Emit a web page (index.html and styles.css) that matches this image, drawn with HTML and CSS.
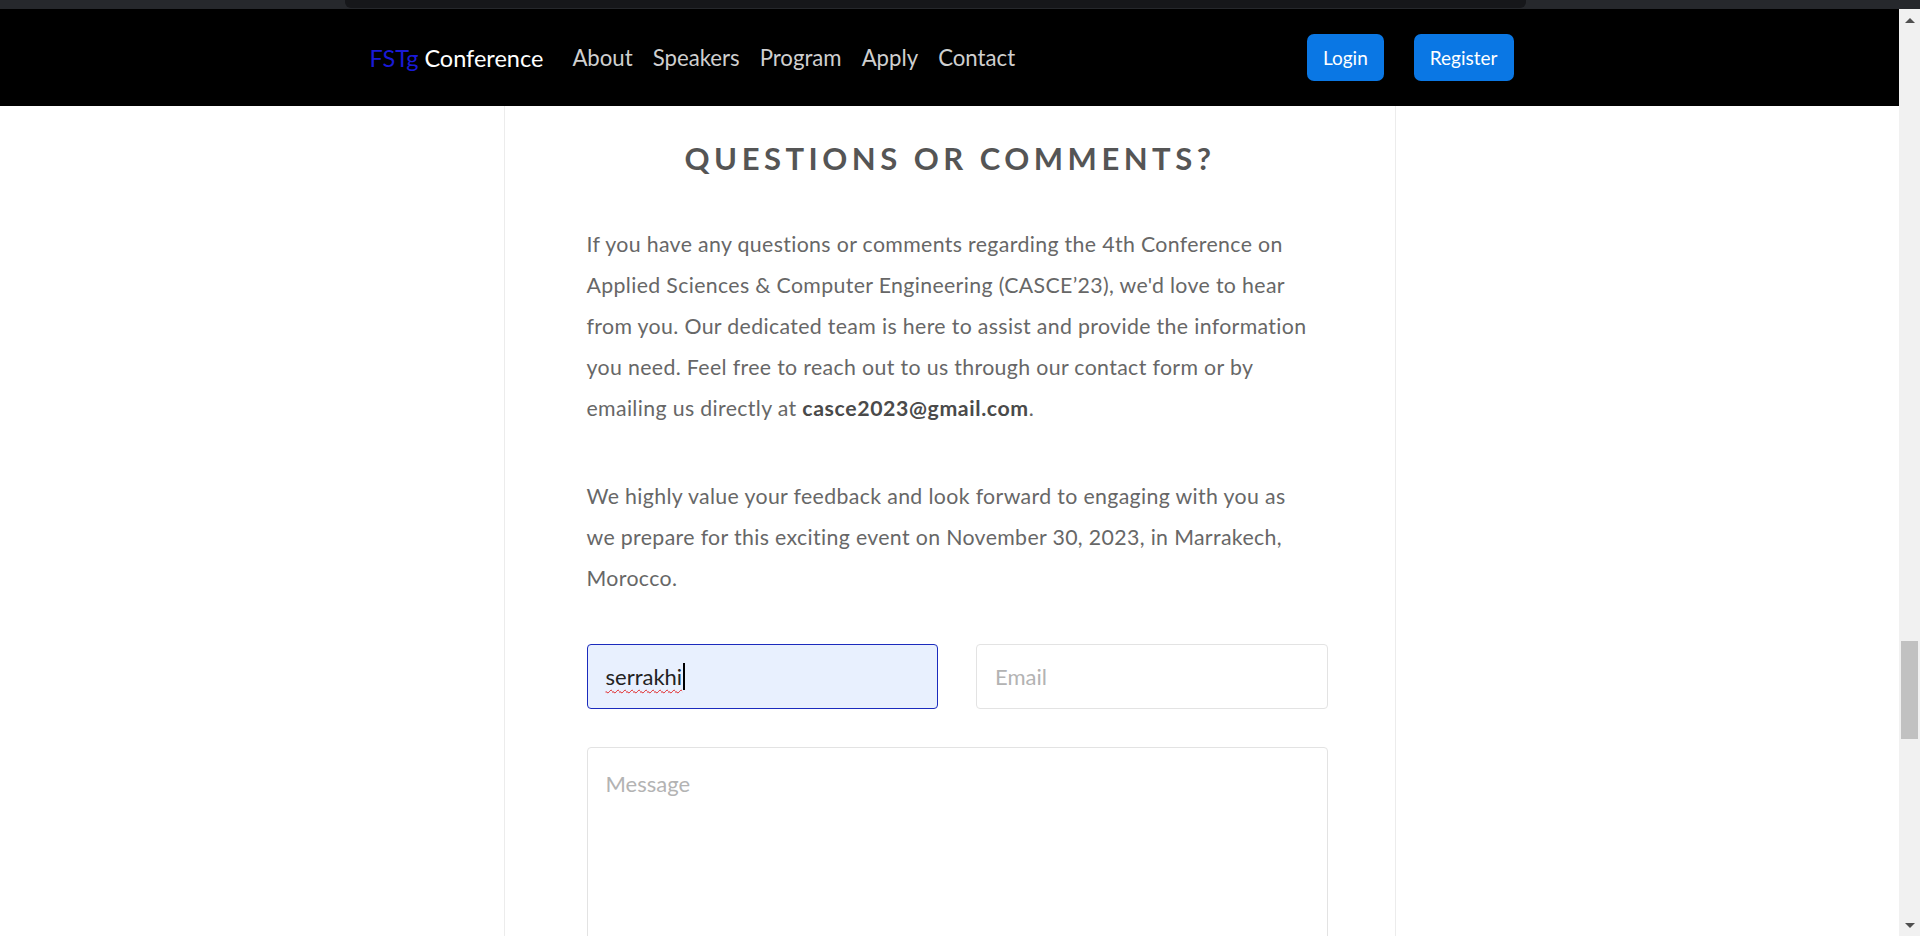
FILE: index.html
```html
<!DOCTYPE html>
<html lang="en">
<head>
<meta charset="utf-8">
<title>FSTg Conference – Contact</title>
<link rel="stylesheet" href="styles.css">
</head>
<body>
<div class="chrome"><div class="chrome-bar"></div></div>
<div class="window">
  <div class="page">
    <header class="navbar">
      <div class="nav-inner">
        <a class="brand" href="#"><span class="brand-accent">FSTg</span> Conference</a>
        <nav class="nav-links">
          <a href="#">About</a>
          <a href="#">Speakers</a>
          <a href="#">Program</a>
          <a href="#">Apply</a>
          <a href="#">Contact</a>
        </nav>
        <div class="nav-actions">
          <a class="btn" href="#">Login</a>
          <a class="btn" href="#">Register</a>
        </div>
      </div>
    </header>
    <main class="card">
      <h2 class="title">QUESTIONS OR COMMENTS?</h2>
      <p class="text">If you have any questions or comments regarding the 4th Conference on Applied Sciences &amp; Computer Engineering (CASCE’23), we'd love to hear from you. Our dedicated team is here to assist and provide the information you need. Feel free to reach out to us through our contact form or by emailing us directly at <strong>casce2023@gmail.com</strong>.</p>
      <p class="text text-last">We highly value your feedback and look forward to engaging with you as we prepare for this exciting event on November 30, 2023, in Marrakech, Morocco.</p>
      <form class="form">
        <div class="field field-focus"><span class="typed">serrakhi</span><span class="caret"></span></div>
        <input class="field" type="email" placeholder="Email">
        <textarea class="field field-message" placeholder="Message"></textarea>
      </form>
    </main>
  </div>
  <div class="scrollbar">
    <div class="sb-btn"><span class="arrow arrow-up"></span></div>
    <div class="sb-track"><div class="sb-thumb"></div></div>
    <div class="sb-btn"><span class="arrow arrow-down"></span></div>
  </div>
</div>
</body>
</html>
```
FILE: styles.css
```css
* { box-sizing: border-box; }

html, body {
  margin: 0;
  height: 936px;
  overflow: hidden;
  background: #fff;
  font-family: Lato, "Liberation Sans", sans-serif;
}

.chrome {
  height: 9px;
  background: #26282c;
  display: flex;
  justify-content: flex-start;
}

.chrome-bar {
  width: 1181px;
  height: 8px;
  margin-left: 345px;
  background: #16171a;
  border-radius: 0 0 6px 6px;
}

.window {
  display: flex;
  height: 927px;
}

.page {
  flex: 1;
  display: flex;
  flex-direction: column;
  overflow: hidden;
}

/* NAVBAR */
.navbar {
  background: #000;
  height: 97px;
  flex: none;
}

.nav-inner {
  width: 1160px;
  height: 100%;
  margin: 0 auto;
  display: flex;
  align-items: center;
}

.brand {
  color: #fff;
  text-decoration: none;
  font-size: 23.5px;
  margin-right: 29px;
}

.brand-accent { color: #1a1ad6; }

.nav-links {
  display: flex;
  gap: 20px;
}

.nav-links a {
  color: #cfcfcf;
  text-decoration: none;
  font-size: 22.2px;
}

.nav-actions {
  margin-left: auto;
  margin-right: 16px;
  display: flex;
  gap: 30px;
}

.btn {
  display: flex;
  align-items: center;
  height: 47px;
  padding: 0 16px;
  background: #0a77e4;
  color: #fff;
  border-radius: 7px;
  text-decoration: none;
  font-size: 19px;
}

/* CARD */
.card {
  flex: 1;
  width: 892px;
  margin: 0 auto;
  border-left: 1px solid #ececec;
  border-right: 1px solid #ececec;
  padding: 32px 67px 0 82px;
}

.title {
  margin: 0 0 45px -14px;
  font-size: 31px;
  line-height: 41px;
  font-weight: 700;
  letter-spacing: 4.5px;
  color: #555;
  text-align: center;
}

.text {
  margin: 0 12px 47px 0;
  font-size: 21.3px;
  line-height: 41px;
  letter-spacing: 0.35px;
  color: #676767;
}

.text strong {
  color: #4a4a4a;
  font-weight: 700;
  letter-spacing: 0.6px;
}

.text-last { margin-bottom: 45px; }

/* FORM */
.form {
  display: grid;
  grid-template-columns: 1fr 1fr;
  gap: 38px;
}

.field {
  height: 65px;
  border: 1px solid #e3e3e3;
  border-radius: 4px;
  background: #fff;
  padding: 0 18px;
  font-family: inherit;
  font-size: 22px;
  color: #222;
  outline: none;
  width: 100%;
}

.field::placeholder { color: #b3b3b3; }

.field-focus {
  display: flex;
  align-items: center;
  background: #e8f0fe;
  border-color: #1b2bbd;
}

.typed {
  text-decoration: underline wavy #e02020;
  text-decoration-thickness: 1px;
  text-underline-offset: 4px;
}

.caret {
  width: 2px;
  height: 27px;
  background: #000;
  margin-left: 1px;
}

.field-message {
  grid-column: 1 / -1;
  height: 260px;
  padding: 22px 18px;
  resize: none;
}

/* SCROLLBAR */
.scrollbar {
  width: 21px;
  flex: none;
  background: #f1f1f1;
  display: flex;
  flex-direction: column;
}

.sb-btn {
  height: 22px;
  display: flex;
  align-items: center;
  justify-content: center;
  flex: none;
}

.arrow {
  width: 0;
  height: 0;
  border-left: 5px solid transparent;
  border-right: 5px solid transparent;
}

.arrow-up { border-bottom: 5px solid #505050; }
.arrow-down { border-top: 5px solid #505050; }

.sb-track { flex: 1; }

.sb-thumb {
  width: 17px;
  height: 98px;
  margin: 610px 0 0 2px;
  background: #c1c1c1;
}
```
